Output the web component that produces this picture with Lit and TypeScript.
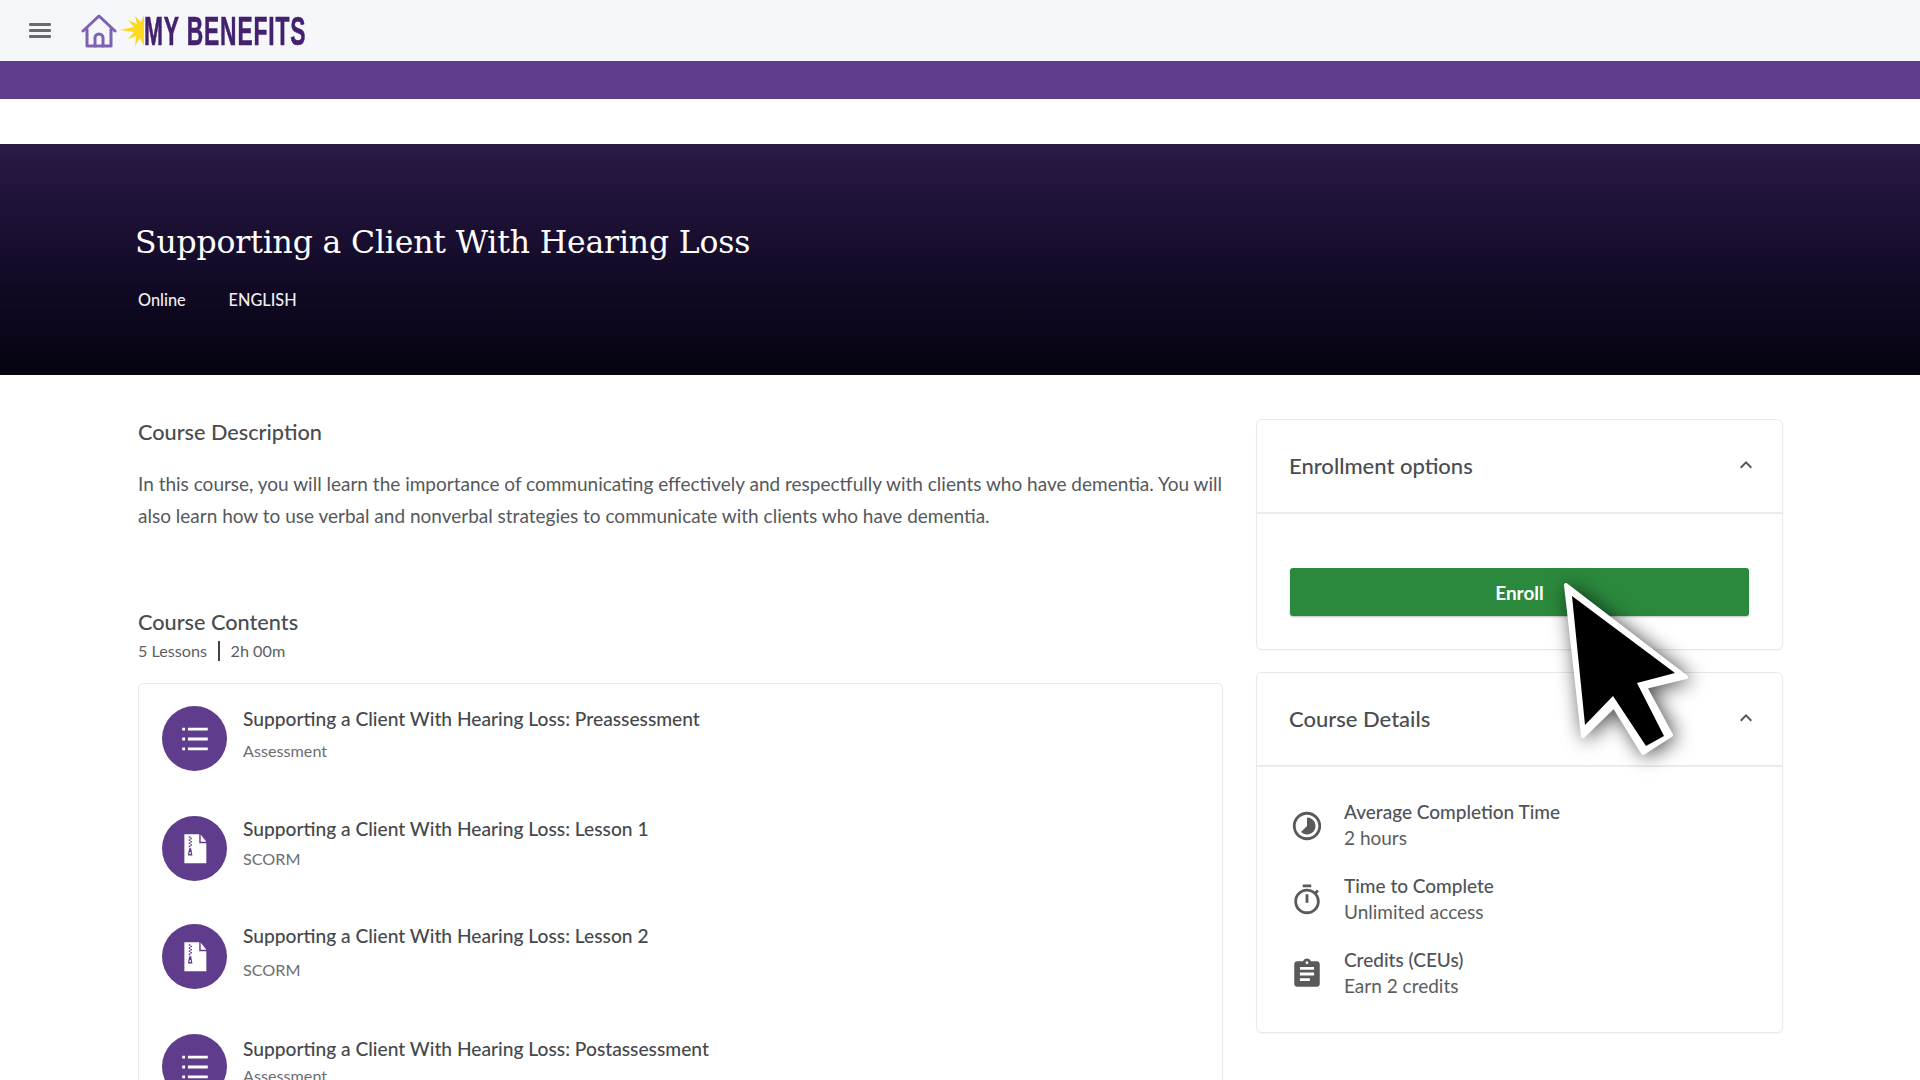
import { LitElement, html, css, svg } from "lit";
import { customElement } from "lit/decorators.js";

const listIcon = svg`<path d="M3 4h2v2H3zM3 11h2v2H3zM3 18h2v2H3zM7 4h14v2H7zM7 11h14v2H7zM7 18h14v2H7z"/>`;
const zipIcon = svg`<path fill-rule="evenodd" d="M4.5 1.5H15V8h5v14H4.5zM7.6 3v1.1h1.1V3zm1.1 1.1v1.1h1.1V4.1zM7.6 5.2v1.1h1.1V5.2zm1.1 1.1v1.1h1.1V6.3zM7.6 7.4v1.1h1.1V7.4zm1.1 1.1v1.1h1.1V8.5zM7.6 9.6v1.1h1.1V9.6zM7.9 11.5l-.9 5h3.2l-.9-5zm.4 2.6h.6l.3 1.4H8z"/><path d="M16 1.8l4 5h-4z"/>`;

const lessons = [
  { t: "Supporting a Client With Hearing Loss: Preassessment", s: "Assessment", icon: listIcon, cls: "a" },
  { t: "Supporting a Client With Hearing Loss: Lesson 1", s: "SCORM", icon: zipIcon, cls: "b" },
  { t: "Supporting a Client With Hearing Loss: Lesson 2", s: "SCORM", icon: zipIcon, cls: "c" },
  { t: "Supporting a Client With Hearing Loss: Postassessment", s: "Assessment", icon: listIcon, cls: "d" },
];

const chevron = html`<svg class="chev" viewBox="0 0 24 24"><path d="M12 8l-6 6 1.41 1.41L12 10.83l4.59 4.58L18 14z"/></svg>`;

const details = [
  { t: "Average Completion Time", s: "2 hours", icon: svg`<path d="M16.24 7.76C15.07 6.59 13.54 6 12 6v6l-4.24 4.24c2.34 2.34 6.14 2.34 8.49 0 2.34-2.34 2.34-6.14-.01-8.48zM12 2C6.48 2 2 6.48 2 12s4.48 10 10 10 10-4.48 10-10S17.52 2 12 2zm0 18c-4.42 0-8-3.58-8-8s3.58-8 8-8 8 3.58 8 8-3.58 8-8 8z"/>` },
  { t: "Time to Complete", s: "Unlimited access", icon: svg`<path d="M15 1H9v2h6V1zm-4 13h2V8h-2v6zm8.03-6.61l1.42-1.42c-.43-.51-.9-.99-1.41-1.41l-1.42 1.42C16.07 4.74 14.12 4 12 4c-4.97 0-9 4.03-9 9s4.02 9 9 9 9-4.03 9-9c0-2.12-.74-4.07-1.97-5.61zM12 20c-3.87 0-7-3.13-7-7s3.13-7 7-7 7 3.13 7 7-3.13 7-7 7z"/>` },
  { t: "Credits (CEUs)", s: "Earn 2 credits", icon: svg`<path d="M19 3h-4.18C14.4 1.84 13.3 1 12 1c-1.3 0-2.4.84-2.82 2H5c-1.1 0-2 .9-2 2v14c0 1.1.9 2 2 2h14c1.1 0 2-.9 2-2V5c0-1.1-.9-2-2-2zm-7 0c.55 0 1 .45 1 1s-.45 1-1 1-1-.45-1-1 .45-1 1-1zm2 14H7v-2h7v2zm3-4H7v-2h10v2zm0-4H7V7h10v2z"/>` },
];

@customElement("app-root")
export class AppRoot extends LitElement {
  static styles = css`
    :host { display: block; position: relative; height: 1080px; overflow: hidden; background: #fff; font-family: Lato, "Open Sans", sans-serif; color: #494c50; }
    * { box-sizing: border-box; }
    .top { height: 61px; background: #f6f7fa; display: flex; align-items: center; padding-left: 29px; }
    .burger { width: 22px; height: 15px; display: flex; flex-direction: column; justify-content: space-between; margin-right: 30px; }
    .burger i { display: block; height: 3px; background: #6b6b6b; border-radius: 1px; }
    .home { width: 36px; height: 36px; margin-right: 3px; }
    .sun { width: 24px; height: 32px; }
    .logo { font-family: "Liberation Sans", sans-serif; font-weight: 700; font-size: 40px; line-height: 40px; color: #44216f; white-space: nowrap; letter-spacing: 1.5px; transform: scaleX(.57); transform-origin: left center; -webkit-text-stroke: .6px #44216f; }
    .band { height: 38px; background: #5f3d8c; }
    .gap { height: 45px; }
    .hero { height: 231px; background: linear-gradient(180deg, #2a1a47 0%, #1f1238 25%, #120a26 60%, #05030f 100%); padding: 78px 0 0 135px; color: #fff; }
    h1 { margin: 0; font-family: "DejaVu Serif", serif; font-weight: 400; font-size: 31.5px; line-height: 40px; letter-spacing: -0.17px; }
    .meta { display: flex; gap: 43px; margin: 28px 0 0 3px; font-size: 16.3px; line-height: 20px; color: #eee; font-weight: 500; }
    .main { display: grid; grid-template-columns: 1085px 527px; column-gap: 33px; padding: 0 138px; }
    .left { padding-top: 43px; }
    h2 { margin: 0; font-size: 21.7px; line-height: 28px; font-weight: 500; color: #494c50; }
    p { margin: 22px 0 0; font-size: 19px; line-height: 32px; color: #55585c; width: 1090px; }
    .contents { margin-top: 76px; }
    .count { display: flex; align-items: center; font-size: 16.2px; line-height: 24px; color: #5d6063; margin-top: 3px; }
    .sep { width: 1.5px; height: 20px; background: #444; margin: 0 11px; }
    .list { margin-top: 20px; border: 1px solid #e9e9ec; border-radius: 5px 5px 0 0; padding: 22px 22px 0 23px; height: 600px; }
    .row { display: flex; gap: 16px; height: 110px; }
    .row.b { height: 108px; }
    .circle { width: 65px; height: 65px; border-radius: 50%; background: #5f3d8c; display: flex; align-items: center; justify-content: center; flex: none; }
    .circle svg { width: 34px; height: 34px; fill: #fff; }
    .rt { font-size: 19.2px; line-height: 26px; font-weight: 500; color: #45484c; }
    .rs { font-size: 16.2px; line-height: 22px; color: #6c6e71; }
    .a .rs { margin-top: 8px; } .b .rs { margin-top: 6px; } .c .rs { margin-top: 10px; } .d .rs { margin-top: 3px; }
    .c .text { margin-top: -1px; } .d .text { margin-top: 2px; }
    .right { padding-top: 44px; display: flex; flex-direction: column; gap: 22px; }
    .card { border: 1px solid #e9e9ec; border-radius: 6px; box-shadow: 0 1px 2px rgba(0,0,0,.04); }
    .head { height: 94px; border-bottom: 2px solid #ececef; display: flex; align-items: center; justify-content: space-between; padding: 0 24px 2px 32px; font-size: 22px; font-weight: 500; color: #494c50; }
    .chev { width: 24px; height: 24px; fill: #555; }
    .enroll { height: 135px; padding: 54px 33px 0; }
    .btn { height: 48px; background: #2b893d; border-radius: 3px; box-shadow: 0 1px 2px rgba(0,0,0,.25); color: #fff; font-size: 19px; font-weight: 700; display: flex; align-items: center; justify-content: center; }
    .dl { padding: 20px 33px 0; height: 265px; }
    .di { display: flex; align-items: center; gap: 20px; height: 74px; }
    .di svg { width: 34px; height: 34px; fill: #5a5a5a; flex: none; margin-top: 3px; }
    .dt { font-size: 19px; line-height: 27px; font-weight: 500; color: #505357; }
    .ds { font-size: 19px; line-height: 26px; color: #5a5d60; }
    .cursor { position: absolute; left: 1540px; top: 560px; width: 170px; height: 220px; filter: drop-shadow(3px 2px 10px rgba(0,0,0,.7)); }
  `;

  render() {
    return html`
      <div class="top">
        <div class="burger"><i></i><i></i><i></i></div>
        <svg class="home" viewBox="0 0 36 36" fill="none" stroke="#7d62b3" stroke-width="3" stroke-linejoin="round" stroke-linecap="round">
          <path d="M2 18L18 3l16 15"/><path d="M6 16v17h24V16"/><path d="M14 33v-8a4 4 0 0 1 8 0v8"/>
        </svg>
        <svg class="sun" viewBox="0 0 24 32"><path fill="#fbd822" d="M24 0L21 7 15 1 17 9 8 5 14 12 0 15 14 17 8 24 16 21 15 31 20 23 24 31Z"/></svg>
        <div class="logo">MY BENEFITS</div>
      </div>
      <div class="band"></div>
      <div class="gap"></div>
      <div class="hero">
        <h1>Supporting a Client With Hearing Loss</h1>
        <div class="meta"><span>Online</span><span>ENGLISH</span></div>
      </div>
      <div class="main">
        <div class="left">
          <h2>Course Description</h2>
          <p>In this course, you will learn the importance of communicating effectively and respectfully with clients who have dementia. You will also learn how to use verbal and nonverbal strategies to communicate with clients who have dementia.</p>
          <div class="contents">
            <h2>Course Contents</h2>
            <div class="count"><span>5 Lessons</span><span class="sep"></span><span>2h 00m</span></div>
            <div class="list">
              ${lessons.map(l => html`
                <div class="row ${l.cls}">
                  <div class="circle"><svg viewBox="0 0 24 24">${l.icon}</svg></div>
                  <div class="text"><div class="rt">${l.t}</div><div class="rs">${l.s}</div></div>
                </div>`)}
            </div>
          </div>
        </div>
        <div class="right">
          <div class="card">
            <div class="head"><span>Enrollment options</span>${chevron}</div>
            <div class="enroll"><div class="btn">Enroll</div></div>
          </div>
          <div class="card">
            <div class="head"><span>Course Details</span>${chevron}</div>
            <div class="dl">
              ${details.map(d => html`
                <div class="di"><svg viewBox="0 0 24 24">${d.icon}</svg>
                  <div><div class="dt">${d.t}</div><div class="ds">${d.s}</div></div>
                </div>`)}
            </div>
          </div>
        </div>
      </div>
      <svg class="cursor" viewBox="1540 560 170 220">
        <path d="M1566 585L1686 677L1645 687L1671 735L1643 753L1614 706L1583 736Z" fill="#fff" stroke="#fff" stroke-width="4" stroke-linejoin="round"/>
        <path d="M1572 596L1675 673L1637 683L1664 736L1646 746L1613 696L1585 725Z" fill="#000"/>
      </svg>
    `;
  }
}
